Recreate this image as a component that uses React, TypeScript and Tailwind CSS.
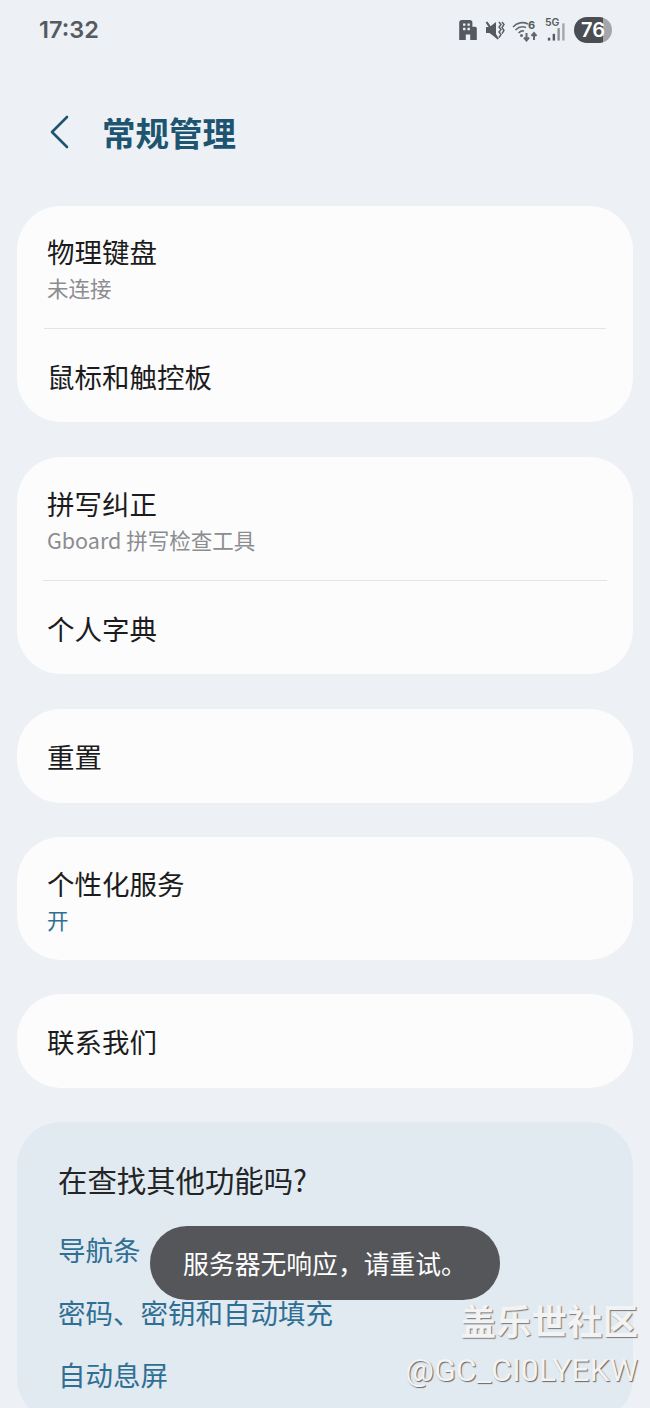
const font = "font-['Inter','Noto_Sans_CJK_SC',sans-serif]";
const cjk = "font-['Noto_Sans_CJK_SC','Inter',sans-serif]";

function Building() {
  return (
    <svg width="20" height="22" viewBox="0 0 18 20" fill="#555a60" className="shrink-0">
      <path fillRule="evenodd" d="M1 3.500A2.500 2.500 0 0 1 3.500 1h7A2.500 2.500 0 0 1 13 3.500V7h2.500A1.500 1.500 0 0 1 17 8.500V19h-6v-5H7v5H1zM4.500 4h2.200v2.200H4.500zm4 0h2.200v2.200H8.500zM4.500 8h2.200v2.200H4.500zm4 0h2.200v2.200H8.500z" />
    </svg>
  );
}
function Mute() {
  return (
    <svg width="20" height="22" viewBox="0 0 20 22" fill="none" className="shrink-0">
      <path d="M1 8h3.500L11 3v16L4.500 14H1z" fill="#555a60" />
      <path d="M1.500 3 13 20" stroke="#555a60" strokeWidth="2.200" />
      <path d="M14 3l2 2.500-2 2.500 2 2.500-2 2.500 2 2.500-2 3M17 3l2 2.500-2 3 2 3-2 3" stroke="#555a60" strokeWidth="1.400" />
    </svg>
  );
}
function Wifi() {
  return (
    <svg width="26" height="24" viewBox="0 0 26 24" fill="none" stroke="#64696f" strokeWidth="1.600" className="shrink-0">
      <path d="M1 9C5 4.500 11 3.500 16 6M3.500 12C6.500 9 10 8 14 9.500M6.500 15C8.500 13 10 12.500 12 13" />
      <circle cx="9.500" cy="17.500" r="1.500" fill="#64696f" stroke="none" />
      <path d="M14.500 15v7M12 19.500 14.500 22.500 17 19.500M22 22v-7M19.500 18 22 15 24.500 18" strokeWidth="2" />
      <text x="16" y="11" fontSize="11" fontWeight="700" fill="#555a60" stroke="none">6</text>
    </svg>
  );
}
function Signal() {
  return (
    <svg width="22" height="22" viewBox="0 0 23 22" fill="#555a60" className="shrink-0">
      <rect x="3" y="18" width="2.500" height="3" />
      <rect x="8" y="14" width="2.500" height="7" />
      <rect x="13" y="8" width="2.500" height="13" fill="#8f9398" />
      <rect x="18" y="3" width="2.500" height="18" fill="#a4a8ac" />
    </svg>
  );
}

function Row({ title, sub, subBlue }: { title: string; sub?: string; subBlue?: boolean }) {
  return (
    <div className="px-[30px]">
      <div className={`${cjk} text-[27.500px] leading-[36px] text-[#1c1c1e]`}>{title}</div>
      {sub && (
        <div className={`${cjk} mt-[4px] text-[21.500px] leading-[30px] ${subBlue ? "text-[#2f6f93]" : "text-[#8b8d90]"}`}>{sub}</div>
      )}
    </div>
  );
}

export default function App() {
  return (
    <div className={`${font} relative h-[1408px] w-[650px] overflow-hidden bg-[#edf1f5]`}>
      <div className="flex h-[60px] items-center justify-between pl-[39px] pr-[38px]">
        <span className="text-[23.500px] font-semibold text-[#555a60]">17:32</span>
        <div className="flex items-center gap-[7px]">
          <Building />
          <Mute />
          <Wifi />
          <div className="relative flex h-[24px] w-[22px] shrink-0 items-end">
            <span className="absolute left-[0px] top-[-1px] text-[10.500px] font-semibold leading-[12px] text-[#555a60]">5G</span>
            <Signal />
          </div>
          <div className="flex h-[26px] w-[38px] shrink-0 items-center justify-center rounded-full bg-[linear-gradient(90deg,#4a4e53_0_76%,#a3a6aa_76%)] text-[20px] font-semibold text-white">76</div>
        </div>
      </div>

      <div className="flex h-[146px] items-start pl-[50px] pt-[55px]">
        <svg width="20" height="34" viewBox="0 0 20 34" fill="none" stroke="#1d5570" strokeWidth="2.600" strokeLinecap="round" strokeLinejoin="round">
          <path d="M17 2 2 17l15 15" />
        </svg>
        <div className={`${cjk} ml-[32px] -mt-[5px] text-[33.500px] font-bold leading-[44px] text-[#1d5570]`}>常规管理</div>
      </div>

      <div className="mx-[17px] flex flex-col gap-[34px]">
        <div className="mb-[1px] flex h-[216px] flex-col rounded-[44px] bg-[#fcfcfc]">
          <div className="h-[122px] pt-[27px]">
            <Row title="物理键盘" sub="未连接" />
          </div>
          <div className="mx-[27px] h-px bg-[#e2e3e5]" />
          <div className="pt-[29px]">
            <Row title="鼠标和触控板" />
          </div>
        </div>

        <div className="mb-[1px] flex h-[217px] flex-col rounded-[44px] bg-[#fcfcfc]">
          <div className="h-[123px] pt-[28px]">
            <Row title="拼写纠正" sub="Gboard 拼写检查工具" />
          </div>
          <div className="mx-[26px] h-px bg-[#e2e3e5]" />
          <div className="pt-[29px]">
            <Row title="个人字典" />
          </div>
        </div>

        <div className="flex h-[94px] items-center rounded-[44px] bg-[#fcfcfc]">
          <Row title="重置" />
        </div>

        <div className="h-[123px] rounded-[44px] bg-[#fcfcfc] pt-[28px]">
          <Row title="个性化服务" sub="开" subBlue />
        </div>

        <div className="flex h-[94px] items-center rounded-[44px] bg-[#fcfcfc]">
          <Row title="联系我们" />
        </div>

        <div className="h-[300px] rounded-[44px] bg-[#e1e9f1] pl-[41px] pt-[39px]">
          <div className={`${cjk} text-[29.400px] leading-[36px] text-[#222426]`}>在查找其他功能吗?</div>
          <div className={`${cjk} mt-[34px] flex flex-col gap-[26px] text-[27.500px] leading-[36.500px] text-[#2f6f93]`}>
            <div>导航条</div>
            <div>密码、密钥和自动填充</div>
            <div>自动息屏</div>
          </div>
        </div>
      </div>

      <div className={`${cjk} absolute left-[150px] top-[1226px] flex h-[74px] w-[350px] items-center justify-center rounded-[37px] bg-[#54565a] text-[25.800px] text-white`}>
        服务器无响应，请重试。
      </div>

      <div className={`${cjk} absolute right-[12px] top-[1298px] text-[35.500px] font-bold leading-[44px] text-[#f3f3f3] [text-shadow:1px_1px_1px_#777]`}>盖乐世社区</div>
      <div className="absolute right-[12px] top-[1352px] font-['Roboto',sans-serif] text-[32px] leading-[36px] text-[#f3f3f3] [text-shadow:1px_1px_1px_#666]">@GC_CI0LYEKW</div>
    </div>
  );
}
